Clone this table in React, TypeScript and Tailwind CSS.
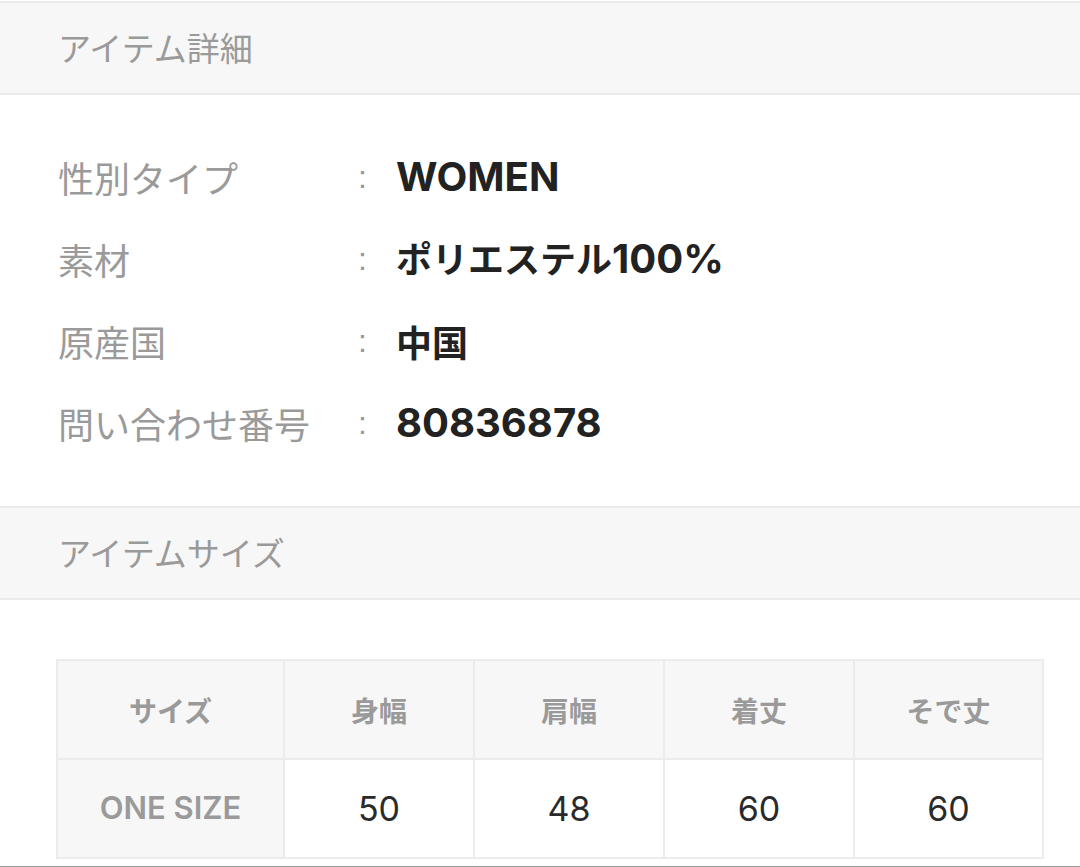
const JP = "font-['Noto_Sans_CJK_JP',sans-serif]";

const details = [
  { label: "性別タイプ", value: <span className="font-['Inter','Noto_Sans_CJK_JP',sans-serif] text-[40px]">WOMEN</span> },
  {
    label: "素材",
    value: (
      <>
        ポリエステル<span className="font-['Inter',sans-serif] text-[40px]">100%</span>
      </>
    ),
  },
  { label: "原産国", value: "中国" },
  { label: "問い合わせ番号", value: <span className="font-['Inter',sans-serif] text-[40px]">80836878</span> },
];

const sizeHeads = ["サイズ", "身幅", "肩幅", "着丈", "そで丈"];
const sizeRow = ["50", "48", "60", "60"];

const SectionHeader = ({ title }: { title: string }) => (
  <div className="h-[94px] border-y-2 border-[#ebebeb] bg-[#f7f7f7] flex items-center pl-[58px]">
    <h2 className={`${JP} text-[33px] text-[#9a9a9a] font-normal`}>{title}</h2>
  </div>
);

const App = () => {
  return (
    <div className={`w-[1080px] h-[867px] bg-white overflow-hidden ${JP}`}>
      <div className="pt-px">
        <SectionHeader title="アイテム詳細" />
      </div>

      <div className="pt-[41px] pb-[42px] pl-[58px]">
        {details.map((row, i) => (
          <div key={i} className="h-[82px] flex items-center">
            <div className="w-[300px] text-[36px] text-[#9a9a9a]">{row.label}</div>
            <div className="w-[38px] text-[32px] text-[#999] font-['Liberation_Sans',sans-serif]">:</div>
            <div className="text-[36px] font-bold text-[#222]">{row.value}</div>
          </div>
        ))}
      </div>

      <SectionHeader title="アイテムサイズ" />

      <div className="pt-[59px] pl-[56px]">
        <table className="border-collapse border-2 border-[#ececec] w-[986px] table-fixed">
          <colgroup>
            <col className="w-[227px]" />
            <col className="w-[190px]" />
            <col className="w-[190px]" />
            <col className="w-[190px]" />
            <col className="w-[189px]" />
          </colgroup>
          <thead>
            <tr className="h-[99px] bg-[#f7f7f7]">
              {sizeHeads.map((h) => (
                <th key={h} className="border-2 border-[#ececec] text-[28px] font-bold text-[#9a9a9a] text-center">
                  {h}
                </th>
              ))}
            </tr>
          </thead>
          <tbody>
            <tr className="h-[99px]">
              <td className="border-2 border-[#ececec] bg-[#f7f7f7] text-center text-[31px] font-semibold text-[#9a9a9a] font-['Inter',sans-serif]">
                ONE SIZE
              </td>
              {sizeRow.map((v, i) => (
                <td key={i} className="border-2 border-[#ececec] text-center text-[34px] text-[#2a2a2a] font-['Inter',sans-serif]">
                  {v}
                </td>
              ))}
            </tr>
          </tbody>
        </table>
      </div>
      <div className="mt-[7px] h-[2px] bg-[#9a9a9a]" />
    </div>
  );
};

export default App;
